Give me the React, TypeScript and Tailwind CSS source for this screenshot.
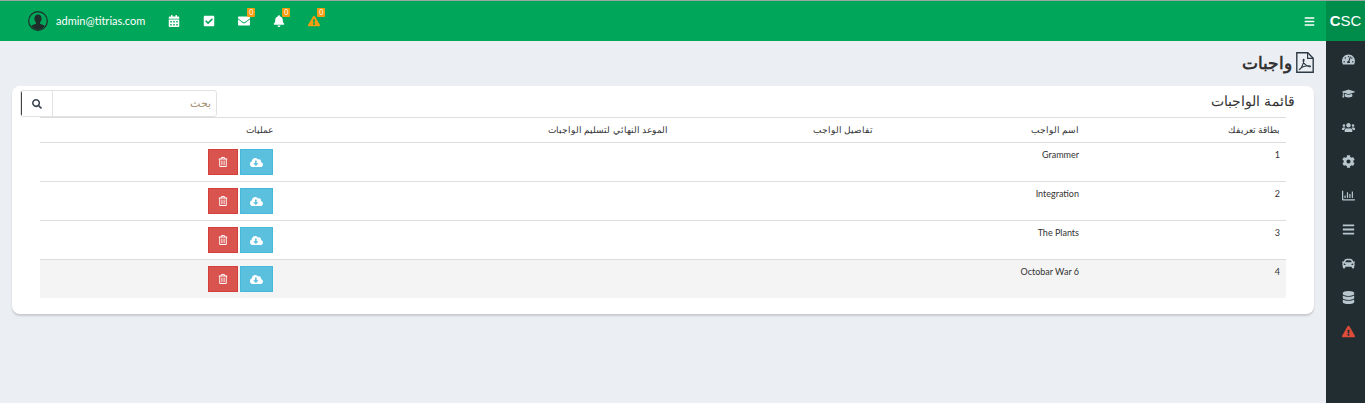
import { Fragment } from "react";
import {
  FaBars,
  FaBell,
  FaCalendarAlt,
  FaCar,
  FaCheckSquare,
  FaCloudDownloadAlt,
  FaCog,
  FaDatabase,
  FaEnvelope,
  FaExclamationTriangle,
  FaGraduationCap,
  FaRegChartBar,
  FaRegTrashAlt,
  FaSearch,
  FaTachometerAlt,
  FaUsers,
} from "react-icons/fa";

const rows = [
  { id: 1, name: "Grammer" },
  { id: 2, name: "Integration" },
  { id: 3, name: "The Plants" },
  { id: 4, name: "Octobar War 6" },
];

const side = [FaTachometerAlt, FaGraduationCap, FaUsers, FaCog, FaRegChartBar, FaBars, FaCar, FaDatabase];

function Badge() {
  return (
    <span className="absolute -top-[7px] left-[10px] flex h-[9px] w-[8px] items-center justify-center rounded-[1px] bg-[#f39c12] text-[7px] leading-none text-white">
      0
    </span>
  );
}

function Avatar() {
  return (
    <svg viewBox="0 0 20 20" className="h-[20px] w-[20px] text-[#1f2d2a]">
      <circle cx="10" cy="10" r="9.3" fill="none" stroke="currentColor" strokeWidth="1.2" />
      <path
        fill="currentColor"
        d="M10 3.6c2.2 0 3.6 1.7 3.6 4 0 1.6-.7 3-1.6 3.8v1.1c0 .5 3.7 1.2 4.8 2.6A8.9 8.9 0 0 1 10 18.9a8.9 8.9 0 0 1-6.8-3.8c1.1-1.4 4.8-2.1 4.8-2.6v-1.1c-.9-.8-1.6-2.2-1.6-3.8 0-2.3 1.4-4 3.6-4z"
      />
    </svg>
  );
}

function PdfIcon() {
  return (
    <svg viewBox="0 0 18 21" className="h-[21px] w-[18px] text-[#2d3a45]" fill="none" stroke="currentColor">
      <path strokeWidth="1.4" d="M.8.8h11l5.4 5.4v14h-16.4z" />
      <path strokeWidth="1.2" d="M11.6 1v5.4h5.4" />
      <path
        strokeWidth="1.1"
        d="M3.4 17.6c1.8-.8 4-5.6 4.6-9.4.2-1.200-.8-1.300-.9 0-.2 2.600 3.400 6.400 6.400 6.600 1.200.1 1.200-1 0-1-2.600-.1-7.400 1-9.600 3.200-.6.7-.9.900-.5.600z"
      />
    </svg>
  );
}

export default function App() {
  return (
    <div dir="ltr" className="flex h-[403px] w-full overflow-hidden bg-[#ebeef3] font-['Lato','Noto_Sans',sans-serif] text-[#333]">
      <div className="flex min-w-0 flex-1 flex-col">
        <header className="flex h-[41px] items-center border-t border-[#9aa5a0] bg-[#00a65a] pl-[28px] pr-[11px] text-white">
          <Avatar />
          <span className="ml-[8px] text-[11px]">admin@titrias.com</span>
          <div className="ml-[22px] flex items-center gap-[21px]">
            <div className="flex w-[14px] justify-center"><FaCalendarAlt className="text-[12px]" /></div>
            <div className="flex w-[14px] justify-center"><FaCheckSquare className="text-[12px]" /></div>
            <div className="relative flex w-[14px] justify-center"><FaEnvelope className="text-[12px]" /><Badge /></div>
            <div className="relative flex w-[14px] justify-center"><FaBell className="text-[12px]" /><Badge /></div>
            <div className="relative flex w-[14px] justify-center"><FaExclamationTriangle className="text-[12px] text-[#f39c12]" /><Badge /></div>
          </div>
          <FaBars className="ml-auto text-[11px]" />
        </header>

        <main className="flex flex-1 flex-col px-[12px]">
          <h1 dir="rtl" className="mt-[10px] flex h-[23px] items-center gap-[4px] text-[17px] font-semibold text-[#333]">
            <PdfIcon />
            واجبات
          </h1>
          <section className="mt-[12px] h-[228px] rounded-[8px] bg-white shadow-[0_2px_2px_rgba(0,0,0,0.15)]">
            <div className="flex h-[31px] items-start justify-between pl-[8px] pr-[19px] pt-[4px]">
              <div className="flex h-[27px] w-[197px] overflow-hidden rounded-[3px] border border-[#e2e2e2]">
                <button className="flex w-[31px] items-center justify-center border-l border-[#444] bg-white text-[#3a4450]"><FaSearch className="text-[10px]" /></button>
                <div dir="rtl" className="flex flex-1 items-center border-l border-[#e2e2e2] px-[5px] text-[11px] text-[#a58f72]">بحث</div>
              </div>
              <h2 dir="rtl" className="text-[14px] text-[#333]">قائمة الواجبات</h2>
            </div>
            <div dir="rtl" className="mx-[28px] grid grid-cols-[201px_206px_205px_395px_1fr] text-[9px] text-[#333]">
              {["بطاقة تعريفك", "اسم الواجب", "تفاصيل الواجب", "الموعد النهائي لتسليم الواجبات", "عمليات"].map((h) => (
                <div key={h} className="flex h-[25px] items-center border-t border-[#ddd] px-[6px]">{h}</div>
              ))}
              {rows.map((r) => (
                <Fragment key={r.id}>
                  <div className={`h-[39px] border-t border-[#ddd] px-[6px] pt-[5px] ${r.id === 4 ? "bg-[#f4f4f4]" : ""}`}>{r.id}</div>
                  <div className={`h-[39px] border-t border-[#ddd] px-[6px] pt-[5px] ${r.id === 4 ? "bg-[#f4f4f4]" : ""}`}>{r.name}</div>
                  <div className={`h-[39px] border-t border-[#ddd] ${r.id === 4 ? "bg-[#f4f4f4]" : ""}`} />
                  <div className={`h-[39px] border-t border-[#ddd] ${r.id === 4 ? "bg-[#f4f4f4]" : ""}`} />
                  <div className={`flex h-[39px] gap-[2px] border-t border-[#ddd] px-[6px] pt-[6px] ${r.id === 4 ? "bg-[#f4f4f4]" : ""}`}>
                    <button className="flex h-[26px] w-[33px] items-center justify-center border border-[#46b8da] bg-[#5bc0de] text-white"><FaCloudDownloadAlt className="text-[13px]" /></button>
                    <button className="flex h-[26px] w-[30px] items-center justify-center border border-[#d43f3a] bg-[#d9534f] text-white"><FaRegTrashAlt className="text-[10px]" /></button>
                  </div>
                </Fragment>
              ))}
            </div>
          </section>
        </main>
      </div>
      <aside className="flex w-[39px] flex-col items-center bg-[#222d32] text-[#b8c7ce]">
        <div className="flex h-[41px] w-full items-center justify-center border-t border-[#9aa5a0] bg-[#008d4c] font-['Liberation_Sans',sans-serif] text-[15px] text-white"><b>C</b>SC</div>
        <div className="flex flex-col items-center gap-[21px] pl-[6px] pt-[12px]">
          {side.map((Icon, i) => <Icon key={i} className="text-[13px]" />)}
          <FaExclamationTriangle className="text-[13px] text-[#dd4b39]" />
        </div>
      </aside>
    </div>
  );
}
